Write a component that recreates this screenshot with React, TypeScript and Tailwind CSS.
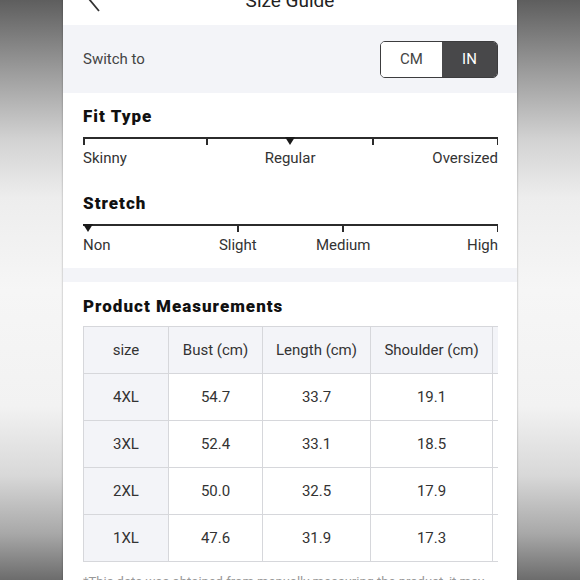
import React from "react";

const font = { fontFamily: "Roboto, 'Noto Sans', Arial, sans-serif" };

function Scale({
  ticks,
  marker,
  labels,
}: {
  ticks: number[];
  marker: number;
  labels: { text: string; pos: number; align: "left" | "center" | "right" }[];
}) {
  return (
    <div className="flex flex-col">
      <div className="relative h-[10px]">
        <div className="absolute left-0 right-0 top-0 h-[1.5px] bg-[#2b2b2b]" />
        {ticks.map((t) => (
          <div
            key={t}
            className="absolute top-0 h-[8px] w-[1.5px] bg-[#2b2b2b]"
            style={{ left: `calc(${t}% - ${t === 100 ? 1.5 : t === 0 ? 0 : 0.75}px)` }}
          />
        ))}
        <svg
          className="absolute top-0"
          width="10"
          height="8"
          viewBox="0 0 10 8"
          style={{ left: `calc(${marker}% - ${marker === 0 ? 0 : 5}px)` }}
        >
          <polygon points="0,0 10,0 5,8" fill="#1a1a1a" />
        </svg>
      </div>
      <div className="relative h-[22px] text-[15px] leading-[22px] text-[#333]">
        {labels.map((l) => (
          <span
            key={l.text}
            className="absolute top-0 whitespace-nowrap"
            style={
              l.align === "left"
                ? { left: 0 }
                : l.align === "right"
                ? { right: 0 }
                : { left: `${l.pos}%`, transform: "translateX(-50%)" }
            }
          >
            {l.text}
          </span>
        ))}
      </div>
    </div>
  );
}

const rows = [
  ["4XL", "54.7", "33.7", "19.1"],
  ["3XL", "52.4", "33.1", "18.5"],
  ["2XL", "50.0", "32.5", "17.9"],
  ["1XL", "47.6", "31.9", "17.3"],
];

export default function App() {
  return (
    <div
      className="w-[580px] h-[580px] overflow-hidden flex items-start bg-[linear-gradient(to_bottom,#5e5e5e_0%,#9a9a9a_12%,#d2d2d2_24%,#ededed_34%,#f6f6f6_50%,#f2f2f2_70%,#d8d8d8_82%,#a8a8a8_92%,#6c6c6c_100%)]"
      style={font}
    >
      <div className="ml-[63px] w-[454px] min-h-[640px] -mt-[24px] shrink-0 flex flex-col bg-white shadow-[0_0_2px_rgba(0,0,0,0.35)]">
        {/* header */}
        <div className="h-[49px] shrink-0 relative flex items-center justify-center bg-white">
          <svg
            className="absolute left-[24px] top-[10px]"
            width="14"
            height="26"
            viewBox="0 0 14 26"
          >
            <polyline points="12,1 2,13 12,25" fill="none" stroke="#333" strokeWidth="1.8" />
          </svg>
          <span className="pt-[2px] text-[19px] text-[#222]">Size Guide</span>
        </div>

        {/* switch */}
        <div className="h-[68px] shrink-0 bg-[#f3f4f8] flex items-center justify-between pl-[20px] pr-[19px]">
          <span className="text-[15px] text-[#444]">Switch to</span>
          <div className="flex h-[37px] rounded-[5px] border-[1.5px] border-[#3c3c3e] overflow-hidden">
            <div className="w-[61px] flex items-center justify-center bg-white text-[15px] text-[#444]">
              CM
            </div>
            <div className="w-[55px] flex items-center justify-center bg-[#48484a] text-[15px] text-white">
              IN
            </div>
          </div>
        </div>

        {/* fit / stretch */}
        <div className="shrink-0 bg-white pl-[20px] pr-[19px] pt-[11px] pb-[12px] flex flex-col">
          <div className="text-[17px] leading-[24px] font-black tracking-[0.06em] text-[#111]">
            Fit Type
          </div>
          <div className="mt-[9px]">
            <Scale
              ticks={[0, 29.9, 69.9, 100]}
              marker={49.9}
              labels={[
                { text: "Skinny", pos: 0, align: "left" },
                { text: "Regular", pos: 49.9, align: "center" },
                { text: "Oversized", pos: 100, align: "right" },
              ]}
            />
          </div>
          <div className="mt-[22px] text-[17px] leading-[24px] font-black tracking-[0.06em] text-[#111]">
            Stretch
          </div>
          <div className="mt-[9px]">
            <Scale
              ticks={[37.3, 62.7, 100]}
              marker={0}
              labels={[
                { text: "Non", pos: 0, align: "left" },
                { text: "Slight", pos: 37.3, align: "center" },
                { text: "Medium", pos: 62.7, align: "center" },
                { text: "High", pos: 100, align: "right" },
              ]}
            />
          </div>
        </div>

        <div className="h-[14px] shrink-0 bg-[#f3f4f8]" />

        {/* measurements */}
        <div className="shrink-0 bg-white pl-[20px] pr-[19px] pt-[12px] flex flex-col">
          <div className="text-[17px] leading-[24px] font-black tracking-[0.06em] text-[#111]">
            Product Measurements
          </div>
          <div className="mt-[8px] overflow-hidden">
            <table className="border-collapse text-[15px] text-[#333] table-fixed w-[520px]">
              <colgroup>
                <col className="w-[85px]" />
                <col className="w-[94px]" />
                <col className="w-[108px]" />
                <col className="w-[122px]" />
                <col className="w-[111px]" />
              </colgroup>
              <thead>
                <tr className="h-[47px] bg-[#f3f4f8]">
                  {["size", "Bust (cm)", "Length (cm)", "Shoulder (cm)", ""].map((h, i) => (
                    <th key={i} className="border border-[#d6d7db] font-normal text-center whitespace-nowrap">
                      {h}
                    </th>
                  ))}
                </tr>
              </thead>
              <tbody>
                {rows.map((r) => (
                  <tr key={r[0]} className="h-[47px]">
                    {r.map((c, i) => (
                      <td
                        key={i}
                        className={`border border-[#d6d7db] text-center ${i === 0 ? "bg-[#f3f4f8]" : "bg-white"}`}
                      >
                        {c}
                      </td>
                    ))}
                    <td className="border border-[#d6d7db] text-center bg-white"></td>
                  </tr>
                ))}
              </tbody>
            </table>
          </div>
          <div className="mt-[11px] text-[13px] leading-[18px] text-[#999]">
            *This data was obtained from manually measuring the product, it may be off by 1-2 CM.
          </div>
        </div>
      </div>
    </div>
  );
}
